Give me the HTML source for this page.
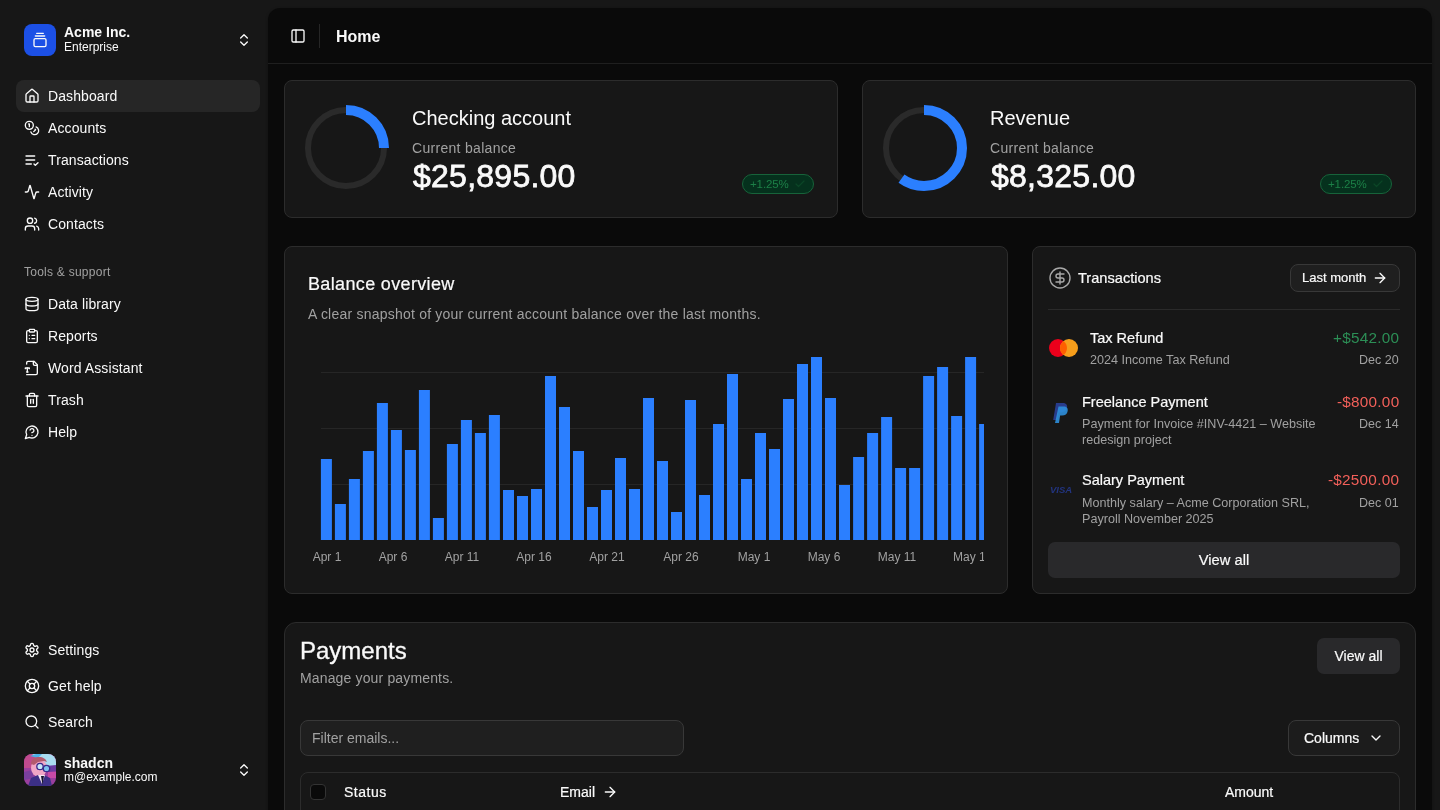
<!DOCTYPE html>
<html><head><meta charset="utf-8">
<style>
*{box-sizing:border-box;margin:0;padding:0}
html,body{width:1440px;height:810px;overflow:hidden;background:#171717;font-family:"Liberation Sans",sans-serif;color:#fafafa}
.abs{position:absolute}
svg.i{position:absolute;width:16px;height:16px;fill:none;stroke:#fafafa;stroke-width:2;stroke-linecap:round;stroke-linejoin:round}
.nav{position:absolute;left:16px;width:244px;height:32px;border-radius:8px}
.nav.active{background:#262626}
.nav svg{left:8px;top:8px}
.nav span{position:absolute;left:32px;top:0;line-height:32px;font-size:14px;color:#fafafa;white-space:nowrap;letter-spacing:0.1px}
#main{position:absolute;left:268px;top:8px;width:1164px;height:820px;background:#0a0a0a;border-radius:12px;overflow:hidden;box-shadow:0 1px 3px rgba(0,0,0,.35)}
.card{position:absolute;background:#171717;border:1px solid #2c2c2c;border-radius:8px}
.t{position:absolute;white-space:nowrap}
.badge{width:72px;height:20px;border-radius:10px;background:#05311d;border:1px solid #17633a}
.badge span{position:absolute;left:7px;top:3.7px;font-size:11.5px;line-height:1;color:#1c8047;letter-spacing:-0.1px}
.badge svg{position:absolute;left:51px;top:2.6px;width:12px;height:12px;fill:none;stroke:#0b4526;stroke-width:2.6;stroke-linecap:round;stroke-linejoin:round}
.xl{position:absolute;top:551px;font-size:12px;line-height:1;color:#a1a1a1;white-space:nowrap;transform:translateX(-50%)}
.sub{font-size:12.6px;line-height:1;color:#a1a1a1;margin-top:1px}
.amt{font-size:15.3px;line-height:1;margin-top:-1px;letter-spacing:0.25px}
.dt{font-size:12.5px;line-height:1;color:#a1a1a1;margin-top:1px}
.t,.nav span,.xl,.badge span{will-change:transform}
.med{-webkit-text-stroke:0.2px currentColor}
</style></head>
<body>
<!-- SIDEBAR -->
<div class="abs" style="left:24px;top:24px;width:32px;height:32px;border-radius:8px;background:#1c50e6">
  <svg class="i" style="left:8px;top:8px" viewBox="0 0 24 24"><path d="M7 2h10"/><path d="M5 6h14"/><rect width="18" height="12" x="3" y="10" rx="2"/></svg>
</div>
<div class="t" style="left:64px;top:24px;font-size:14px;font-weight:700;line-height:17px">Acme Inc.</div>
<div class="t" style="left:64px;top:40px;font-size:12px;line-height:14px">Enterprise</div>
<svg class="i" style="left:236px;top:32px" viewBox="0 0 24 24"><path d="m7 15 5 5 5-5"/><path d="m7 9 5-5 5 5"/></svg>

<div class="nav active" style="top:80px"><svg class="i" viewBox="0 0 24 24"><path d="M15 21v-8a1 1 0 0 0-1-1h-4a1 1 0 0 0-1 1v8"/><path d="M3 10a2 2 0 0 1 .709-1.528l7-5.999a2 2 0 0 1 2.582 0l7 5.999A2 2 0 0 1 21 10v9a2 2 0 0 1-2 2H5a2 2 0 0 1-2-2z"/></svg><span>Dashboard</span></div>
<div class="nav" style="top:112px"><svg class="i" viewBox="0 0 24 24"><circle cx="8" cy="8" r="6"/><path d="M18.09 10.37A6 6 0 1 1 10.34 18"/><path d="M7 6h1v4"/><path d="m16.71 13.88.7.71-2.82 2.82"/></svg><span>Accounts</span></div>
<div class="nav" style="top:144px"><svg class="i" viewBox="0 0 24 24"><path d="M11 18H3"/><path d="m15 18 2 2 4-4"/><path d="M16 12H3"/><path d="M16 6H3"/></svg><span>Transactions</span></div>
<div class="nav" style="top:176px"><svg class="i" viewBox="0 0 24 24"><path d="M22 12h-2.48a2 2 0 0 0-1.93 1.46l-2.35 8.36a.25.25 0 0 1-.48 0L9.24 2.18a.25.25 0 0 0-.48 0l-2.35 8.36A2 2 0 0 1 4.49 12H2"/></svg><span>Activity</span></div>
<div class="nav" style="top:208px"><svg class="i" viewBox="0 0 24 24"><path d="M16 21v-2a4 4 0 0 0-4-4H6a4 4 0 0 0-4 4v2"/><circle cx="9" cy="7" r="4"/><path d="M22 21v-2a4 4 0 0 0-3-3.87"/><path d="M16 3.13a4 4 0 0 1 0 7.75"/></svg><span>Contacts</span></div>

<div class="t" style="left:24px;top:264px;font-size:12px;line-height:16px;color:#a1a1a1;letter-spacing:0.25px">Tools &amp; support</div>
<div class="nav" style="top:288px"><svg class="i" viewBox="0 0 24 24"><ellipse cx="12" cy="5" rx="9" ry="3"/><path d="M3 5V19A9 3 0 0 0 21 19V5"/><path d="M3 12A9 3 0 0 0 21 12"/></svg><span>Data library</span></div>
<div class="nav" style="top:320px"><svg class="i" viewBox="0 0 24 24"><rect width="8" height="4" x="8" y="2" rx="1" ry="1"/><path d="M16 4h2a2 2 0 0 1 2 2v14a2 2 0 0 1-2 2H6a2 2 0 0 1-2-2V6a2 2 0 0 1 2-2h2"/><path d="M12 11h4"/><path d="M12 16h4"/><path d="M8 11h.01"/><path d="M8 16h.01"/></svg><span>Reports</span></div>
<div class="nav" style="top:352px"><svg class="i" viewBox="0 0 24 24"><path d="M4 22h14a2 2 0 0 0 2-2V7l-5-5H6a2 2 0 0 0-2 2v2"/><path d="M14 2v4a2 2 0 0 0 2 2h4"/><path d="M2 13v-1h6v1"/><path d="M5 12v6"/><path d="M4 18h2"/></svg><span>Word Assistant</span></div>
<div class="nav" style="top:384px"><svg class="i" viewBox="0 0 24 24"><path d="M3 6h18"/><path d="M19 6v14c0 1-1 2-2 2H7c-1 0-2-1-2-2V6"/><path d="M8 6V4c0-1 1-2 2-2h4c1 0 2 1 2 2v2"/><line x1="10" x2="10" y1="11" y2="17"/><line x1="14" x2="14" y1="11" y2="17"/></svg><span>Trash</span></div>
<div class="nav" style="top:416px"><svg class="i" viewBox="0 0 24 24"><path d="M7.9 20A9 9 0 1 0 4 16.1L2 22Z"/><path d="M9.09 9a3 3 0 0 1 5.83 1c0 2-3 3-3 3"/><path d="M12 17h.01"/></svg><span>Help</span></div>

<div class="nav" style="top:634px"><svg class="i" viewBox="0 0 24 24"><path d="M12.22 2h-.44a2 2 0 0 0-2 2v.18a2 2 0 0 1-1 1.730l-.43.25a2 2 0 0 1-2 0l-.15-.08a2 2 0 0 0-2.73.73l-.22.38a2 2 0 0 0 .73 2.73l.15.1a2 2 0 0 1 1 1.72v.51a2 2 0 0 1-1 1.74l-.15.09a2 2 0 0 0-.73 2.73l.22.38a2 2 0 0 0 2.73.73l.15-.08a2 2 0 0 1 2 0l.43.25a2 2 0 0 1 1 1.73V20a2 2 0 0 0 2 2h.44a2 2 0 0 0 2-2v-.18a2 2 0 0 1 1-1.73l.43-.25a2 2 0 0 1 2 0l.15.08a2 2 0 0 0 2.73-.73l.22-.39a2 2 0 0 0-.73-2.73l-.15-.08a2 2 0 0 1-1-1.740v-.5a2 2 0 0 1 1-1.74l.15-.09a2 2 0 0 0 .73-2.73l-.22-.38a2 2 0 0 0-2.73-.73l-.15.08a2 2 0 0 1-2 0l-.43-.25a2 2 0 0 1-1-1.73V4a2 2 0 0 0-2-2z"/><circle cx="12" cy="12" r="3"/></svg><span>Settings</span></div>
<div class="nav" style="top:670px"><svg class="i" viewBox="0 0 24 24"><circle cx="12" cy="12" r="10"/><path d="m4.93 4.93 4.24 4.24"/><path d="m14.83 9.17 4.24-4.24"/><path d="m14.83 14.830 4.24 4.24"/><path d="m9.17 14.83-4.24 4.24"/><circle cx="12" cy="12" r="4"/></svg><span>Get help</span></div>
<div class="nav" style="top:706px"><svg class="i" viewBox="0 0 24 24"><circle cx="11" cy="11" r="8"/><path d="m21 21-4.3-4.3"/></svg><span>Search</span></div>

<!-- user -->
<svg class="abs" style="left:24px;top:754px;border-radius:8px" width="32" height="32" viewBox="0 0 32 32">
<rect width="32" height="32" fill="#9a3f9e"/>
<path d="M0 0h32v14H0z" fill="#c04a8e"/>
<path d="M8 0h24v13l-6 2-4-4-6-6z" fill="#a9dcf0"/>
<path d="M6 2l6-2h6l-4 4z" fill="#4bb0e8"/>
<path d="M22 12l10-1v6l-8 1z" fill="#6a3aa0"/>
<path d="M0 18l8-2 2 8-10 2z" fill="#7a3f9e"/>
<path d="M24 18h8v6h-8z" fill="#c84aa6"/>
<ellipse cx="15" cy="14" rx="8" ry="9" fill="#f0a6c6"/>
<path d="M7 10c0-5 4-7 8-7s7 2 8 5l-3-1-6 1-4 3z" fill="#b35a6e"/>
<circle cx="16" cy="12.5" r="3.2" fill="#c8e6f8" stroke="#3a2a8a" stroke-width="1.3"/>
<circle cx="22.5" cy="14.5" r="3.2" fill="#7cc0ee" stroke="#3a2a8a" stroke-width="1.3"/>
<path d="M4 32l3-8 7-3h6l6 3 2 8z" fill="#3b2f86"/>
<path d="M14 21l4 9 3-9z" fill="#f4e6f0"/>
<path d="M17 22l1.5 9 1.5-9z" fill="#151530"/>
</svg>
<div class="t" style="left:64px;top:755px;font-size:14px;font-weight:700;line-height:16px">shadcn</div>
<div class="t" style="left:64px;top:770px;font-size:12px;line-height:14px">m@example.com</div>
<svg class="i" style="left:236px;top:762px" viewBox="0 0 24 24"><path d="m7 15 5 5 5-5"/><path d="m7 9 5-5 5 5"/></svg>

<!-- MAIN -->
<div id="main"></div>

<!-- header -->
<svg class="i" style="left:290px;top:28px" viewBox="0 0 24 24"><rect width="18" height="18" x="3" y="3" rx="2"/><path d="M9 3v18"/></svg>
<div class="abs" style="left:319px;top:24px;width:1px;height:24px;background:#262626"></div>
<div class="t" style="left:336px;top:28.5px;font-size:16px;line-height:1;font-weight:700">Home</div>
<div class="abs" style="left:268px;top:63px;width:1164px;height:1px;background:#1f1f1f"></div>

<!-- card 1 -->
<div class="card" style="left:284px;top:80px;width:554px;height:138px"></div>
<svg class="abs" style="left:297.7px;top:99.5px" width="96" height="96" viewBox="0 0 96 96"><circle cx="48" cy="48" r="38" fill="none" stroke="#2a2a2a" stroke-width="6"/><circle cx="48" cy="48" r="38" fill="none" stroke="#2b7fff" stroke-width="10" stroke-dasharray="59.69 300" transform="rotate(-90 48 48)"/></svg>
<div class="t" style="left:412px;top:108px;font-size:20px;line-height:1">Checking account</div>
<div class="t" style="left:412px;top:141.4px;font-size:14px;line-height:1;color:#a1a1a1;letter-spacing:0.3px">Current balance</div>
<div class="t" style="left:413px;top:160.4px;font-size:32px;line-height:1;font-weight:400;-webkit-text-stroke:0.8px #fafafa;letter-spacing:0.25px">$25,895.00</div>
<div class="abs badge" style="left:742px;top:174px"><span>+1.25%</span><svg viewBox="0 0 24 24"><path d="M20 6 9 17l-5-5"/></svg></div>

<!-- card 2 -->
<div class="card" style="left:862px;top:80px;width:554px;height:138px"></div>
<svg class="abs" style="left:876.2px;top:100.2px" width="96" height="96" viewBox="0 0 96 96"><circle cx="48" cy="48" r="38" fill="none" stroke="#2a2a2a" stroke-width="6"/><circle cx="48" cy="48" r="38" fill="none" stroke="#2b7fff" stroke-width="10" stroke-dasharray="143.26 300" transform="rotate(-90 48 48)"/></svg>
<div class="t" style="left:990px;top:108px;font-size:20px;line-height:1">Revenue</div>
<div class="t" style="left:990px;top:141.4px;font-size:14px;line-height:1;color:#a1a1a1;letter-spacing:0.3px">Current balance</div>
<div class="t" style="left:991px;top:160.4px;font-size:32px;line-height:1;font-weight:400;-webkit-text-stroke:0.8px #fafafa;letter-spacing:0.25px">$8,325.00</div>
<div class="abs badge" style="left:1320px;top:174px"><span>+1.25%</span><svg viewBox="0 0 24 24"><path d="M20 6 9 17l-5-5"/></svg></div>

<!-- balance overview -->
<div class="card" style="left:284px;top:246px;width:724px;height:348px"></div>
<div class="t" style="left:308px;top:274.8px;font-size:18px;line-height:1;letter-spacing:0.35px;-webkit-text-stroke:0.2px #fafafa">Balance overview</div>
<div class="t" style="left:308px;top:307.1px;font-size:14px;line-height:1;color:#a1a1a1;letter-spacing:0.22px">A clear snapshot of your current account balance over the last months.</div>
<svg class="abs" style="left:320px;top:340px" width="664" height="200" viewBox="0 0 664 200">
<g stroke="#262626" stroke-width="1"><line x1="1" x2="664" y1="32.5" y2="32.5"/><line x1="1" x2="664" y1="88.5" y2="88.5"/><line x1="1" x2="664" y1="144.5" y2="144.5"/></g>
<g fill="#2b7fff"><rect x="0.9" y="119" width="11" height="81"/><rect x="14.9" y="164" width="11" height="36"/><rect x="28.9" y="139" width="11" height="61"/><rect x="42.9" y="111" width="11" height="89"/><rect x="56.9" y="63" width="11" height="137"/><rect x="70.9" y="90" width="11" height="110"/><rect x="84.9" y="110" width="11" height="90"/><rect x="98.9" y="50" width="11" height="150"/><rect x="112.9" y="178" width="11" height="22"/><rect x="126.9" y="104" width="11" height="96"/><rect x="140.9" y="80" width="11" height="120"/><rect x="154.9" y="93" width="11" height="107"/><rect x="168.9" y="75" width="11" height="125"/><rect x="183.0" y="150" width="11" height="50"/><rect x="197.0" y="156" width="11" height="44"/><rect x="211.0" y="149" width="11" height="51"/><rect x="225.0" y="36" width="11" height="164"/><rect x="239.0" y="67" width="11" height="133"/><rect x="253.0" y="111" width="11" height="89"/><rect x="267.0" y="167" width="11" height="33"/><rect x="281.0" y="150" width="11" height="50"/><rect x="295.0" y="118" width="11" height="82"/><rect x="309.0" y="149" width="11" height="51"/><rect x="323.0" y="58" width="11" height="142"/><rect x="337.0" y="121" width="11" height="79"/><rect x="351.0" y="172" width="11" height="28"/><rect x="365.0" y="60" width="11" height="140"/><rect x="379.0" y="155" width="11" height="45"/><rect x="393.0" y="84" width="11" height="116"/><rect x="407.0" y="34" width="11" height="166"/><rect x="421.0" y="139" width="11" height="61"/><rect x="435.0" y="93" width="11" height="107"/><rect x="449.0" y="109" width="11" height="91"/><rect x="463.0" y="59" width="11" height="141"/><rect x="477.0" y="24" width="11" height="176"/><rect x="491.0" y="17" width="11" height="183"/><rect x="505.0" y="58" width="11" height="142"/><rect x="519.0" y="145" width="11" height="55"/><rect x="533.1" y="117" width="11" height="83"/><rect x="547.1" y="93" width="11" height="107"/><rect x="561.1" y="77" width="11" height="123"/><rect x="575.1" y="128" width="11" height="72"/><rect x="589.1" y="128" width="11" height="72"/><rect x="603.1" y="36" width="11" height="164"/><rect x="617.1" y="27" width="11" height="173"/><rect x="631.1" y="76" width="11" height="124"/><rect x="645.1" y="17" width="11" height="183"/><rect x="659.1" y="84" width="11" height="116"/></g></svg>
<div class="xl" style="left:327px">Apr 1</div>
<div class="xl" style="left:393px">Apr 6</div>
<div class="xl" style="left:462px">Apr 11</div>
<div class="xl" style="left:534px">Apr 16</div>
<div class="xl" style="left:607px">Apr 21</div>
<div class="xl" style="left:681px">Apr 26</div>
<div class="xl" style="left:754px">May 1</div>
<div class="xl" style="left:824px">May 6</div>
<div class="xl" style="left:897px">May 11</div>
<div class="abs" style="left:940px;top:548px;width:44px;height:20px;overflow:hidden"><div class="t" style="left:13px;top:3px;font-size:12px;line-height:1;color:#a1a1a1">May 16</div></div>

<!-- transactions -->
<div class="card" style="left:1032px;top:246px;width:384px;height:348px"></div>
<svg class="abs" style="left:1048px;top:266px;width:24px;height:24px;fill:none;stroke:#a8a8a8;stroke-width:1.4;stroke-linecap:round;stroke-linejoin:round" viewBox="0 0 24 24"><circle cx="12" cy="12" r="10"/><path d="M16 8h-6a2 2 0 1 0 0 4h4a2 2 0 1 1 0 4H8"/><path d="M12 18V6"/></svg>
<div class="t med" style="left:1078px;top:270.7px;font-size:14.6px;line-height:1">Transactions</div>
<div class="abs" style="left:1290px;top:264px;width:110px;height:28px;border:1px solid #383838;border-radius:8px;background:#1f1f1f"></div>
<div class="t med" style="left:1302px;top:271.2px;font-size:13px;line-height:1">Last month</div>
<svg class="i" style="left:1372px;top:270px" viewBox="0 0 24 24"><path d="M5 12h14"/><path d="m12 5 7 7-7 7"/></svg>
<div class="abs" style="left:1048px;top:309px;width:352px;height:1px;background:#2a2a2a"></div>

<svg class="abs" style="left:1048px;top:338px" width="32" height="20" viewBox="0 0 32 20"><circle cx="10" cy="10" r="9" fill="#eb001b"/><circle cx="21" cy="10" r="9" fill="#f79e1b"/><path d="M15.5 2.9a9 9 0 0 1 0 14.2a9 9 0 0 1 0-14.2z" fill="#ff5f00"/></svg>
<div class="t med" style="left:1090px;top:331px;font-size:14.5px;line-height:1">Tax Refund</div>
<div class="t sub" style="left:1090px;top:353.3px">2024 Income Tax Refund</div>
<div class="t amt" style="right:41px;top:331px;color:#2c8f56">+$542.00</div>
<div class="t dt" style="right:41px;top:353.3px">Dec 20</div>

<svg class="abs" style="left:1050px;top:402px" width="20" height="22" viewBox="0 0 20 22"><path d="M6 1h6.5c3.5 0 5 1.8 4.6 4.6c-.5 3.2-2.7 4.8-6 4.8H8.8L7.6 18H3.2z" fill="#283c8c"/><path d="M8.5 4.5h5c3.3 0 4.6 1.8 4.2 4.4c-.5 3-2.6 4.6-5.6 4.6h-2L9 21H5z" fill="#2d8fdc" opacity=".9"/></svg>
<div class="t med" style="left:1082px;top:395px;font-size:14.5px;line-height:1">Freelance Payment</div>
<div class="t sub" style="left:1082px;top:417.4px">Payment for Invoice #INV-4421 – Website</div>
<div class="t sub" style="left:1082px;top:433.4px">redesign project</div>
<div class="t amt" style="right:41px;top:395px;color:#f2605a">-$800.00</div>
<div class="t dt" style="right:41px;top:417.4px">Dec 14</div>

<div class="t" style="left:1050px;top:485.3px;font-size:9.5px;line-height:1;font-weight:700;font-style:italic;color:#22347f;letter-spacing:0px">VISA</div>
<div class="t med" style="left:1082px;top:473px;font-size:14.5px;line-height:1">Salary Payment</div>
<div class="t sub" style="left:1082px;top:495.5px">Monthly salary – Acme Corporation SRL,</div>
<div class="t sub" style="left:1082px;top:511.6px">Payroll November 2025</div>
<div class="t amt" style="right:41px;top:473px;color:#f2605a">-$2500.00</div>
<div class="t dt" style="right:41px;top:495.5px">Dec 01</div>

<div class="abs" style="left:1048px;top:542px;width:352px;height:36px;border-radius:7px;background:#29292b"></div>
<div class="t med" style="left:1048px;width:352px;text-align:center;top:553px;font-size:14.7px;line-height:1">View all</div>

<!-- payments -->
<div class="card" style="left:284px;top:622px;width:1132px;height:260px;border-radius:12px"></div>
<div class="t" style="left:300px;top:639.1px;font-size:24px;line-height:1;-webkit-text-stroke:0.3px #fafafa">Payments</div>
<div class="t" style="left:300px;top:671px;font-size:14px;line-height:1;color:#a1a1a1;letter-spacing:0.15px">Manage your payments.</div>
<div class="abs" style="left:1317px;top:638px;width:83px;height:36px;border-radius:7px;background:#29292b"></div>
<div class="t med" style="left:1317px;width:83px;text-align:center;top:649px;font-size:14px;line-height:1">View all</div>
<div class="abs" style="left:300px;top:720px;width:384px;height:36px;border:1px solid #383838;border-radius:8px;background:#1f1f1f"></div>
<div class="t" style="left:312px;top:731px;font-size:14px;line-height:1;color:#a1a1a1">Filter emails...</div>
<div class="abs" style="left:1288px;top:720px;width:112px;height:36px;border:1px solid #383838;border-radius:8px;background:#1c1c1c"></div>
<div class="t med" style="left:1304px;top:731px;font-size:14px;line-height:1">Columns</div>
<svg class="i" style="left:1368px;top:730px" viewBox="0 0 24 24"><path d="m6 9 6 6 6-6"/></svg>
<div class="abs" style="left:300px;top:772px;width:1100px;height:100px;border:1px solid #2c2c2c;border-radius:8px"></div>
<div class="abs" style="left:310px;top:784px;width:16px;height:16px;border:1px solid #333;border-radius:4px;background:#0a0a0a"></div>
<div class="t med" style="left:344px;top:784.6px;font-size:14px;line-height:1;letter-spacing:0.5px">Status</div>
<div class="t med" style="left:560px;top:784.6px;font-size:14px;line-height:1">Email</div>
<svg class="i" style="left:602px;top:784px" viewBox="0 0 24 24"><path d="M5 12h14"/><path d="m12 5 7 7-7 7"/></svg>
<div class="t med" style="left:1225px;top:784.6px;font-size:14px;line-height:1">Amount</div>

</body></html>
